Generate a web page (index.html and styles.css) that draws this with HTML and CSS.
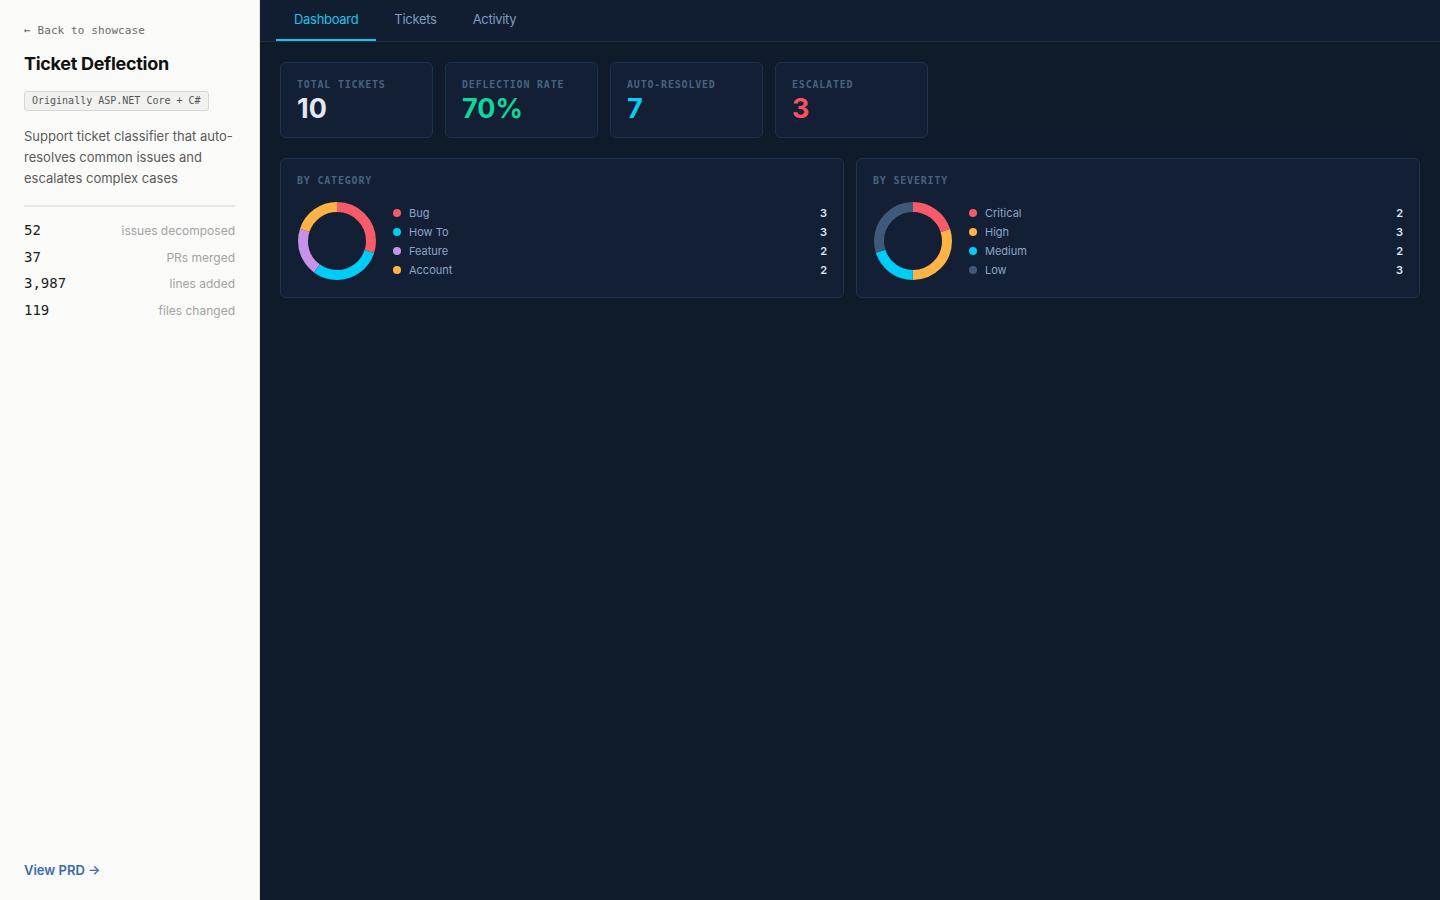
FILE: index.html
```html
<!DOCTYPE html>
<html>
<head>
<meta charset="utf-8">
<link rel="stylesheet" href="styles.css">
</head>
<body>
<div class="app">
  <aside class="sidebar">
    <div class="side-top">
      <a class="back">← Back to showcase</a>
      <h1 class="title">Ticket Deflection</h1>
      <span class="badge">Originally ASP.NET Core + C#</span>
      <p class="desc">Support ticket classifier that auto-resolves common issues and escalates complex cases</p>
      <div class="stats">
        <div class="stat"><span class="num">52</span><span class="lbl">issues decomposed</span></div>
        <div class="stat"><span class="num">37</span><span class="lbl">PRs merged</span></div>
        <div class="stat"><span class="num">3,987</span><span class="lbl">lines added</span></div>
        <div class="stat"><span class="num">119</span><span class="lbl">files changed</span></div>
      </div>
    </div>
    <a class="prd">View PRD →</a>
  </aside>
  <main class="main">
    <nav class="tabs">
      <a class="tab active">Dashboard</a>
      <a class="tab">Tickets</a>
      <a class="tab">Activity</a>
    </nav>
    <section class="content">
      <div class="cards">
        <div class="card"><div class="card-lbl">Total Tickets</div><div class="card-val white">10</div></div>
        <div class="card"><div class="card-lbl">Deflection Rate</div><div class="card-val green">70%</div></div>
        <div class="card"><div class="card-lbl">Auto-Resolved</div><div class="card-val cyan">7</div></div>
        <div class="card"><div class="card-lbl">Escalated</div><div class="card-val red">3</div></div>
      </div>
      <div class="panels">
        <div class="panel">
          <div class="panel-title">By Category</div>
          <div class="panel-body">
            <svg class="donut" width="80" height="80" viewBox="0 0 80 80">
              <g transform="rotate(-90 40 40)" fill="none" stroke-width="10">
                <circle cx="40" cy="40" r="34" stroke="#f75a68" stroke-dasharray="64.09 213.63" stroke-dashoffset="0"/>
                <circle cx="40" cy="40" r="34" stroke="#00cdf7" stroke-dasharray="64.09 213.63" stroke-dashoffset="-64.09"/>
                <circle cx="40" cy="40" r="34" stroke="#c792ea" stroke-dasharray="42.73 213.63" stroke-dashoffset="-128.18"/>
                <circle cx="40" cy="40" r="34" stroke="#ffb347" stroke-dasharray="42.73 213.63" stroke-dashoffset="-170.90"/>
              </g>
            </svg>
            <ul class="legend">
              <li><span class="dot" style="background:#f75a68"></span><span class="name">Bug</span><span class="val">3</span></li>
              <li><span class="dot" style="background:#00cdf7"></span><span class="name">How To</span><span class="val">3</span></li>
              <li><span class="dot" style="background:#c792ea"></span><span class="name">Feature</span><span class="val">2</span></li>
              <li><span class="dot" style="background:#ffb347"></span><span class="name">Account</span><span class="val">2</span></li>
            </ul>
          </div>
        </div>
        <div class="panel">
          <div class="panel-title">By Severity</div>
          <div class="panel-body">
            <svg class="donut" width="80" height="80" viewBox="0 0 80 80">
              <g transform="rotate(-90 40 40)" fill="none" stroke-width="10">
                <circle cx="40" cy="40" r="34" stroke="#f75a68" stroke-dasharray="42.73 213.63" stroke-dashoffset="0"/>
                <circle cx="40" cy="40" r="34" stroke="#ffb347" stroke-dasharray="64.09 213.63" stroke-dashoffset="-42.73"/>
                <circle cx="40" cy="40" r="34" stroke="#00cdf7" stroke-dasharray="42.73 213.63" stroke-dashoffset="-106.82"/>
                <circle cx="40" cy="40" r="34" stroke="#3d5a7a" stroke-dasharray="64.09 213.63" stroke-dashoffset="-149.54"/>
              </g>
            </svg>
            <ul class="legend">
              <li><span class="dot" style="background:#f75a68"></span><span class="name">Critical</span><span class="val">2</span></li>
              <li><span class="dot" style="background:#ffb347"></span><span class="name">High</span><span class="val">3</span></li>
              <li><span class="dot" style="background:#00cdf7"></span><span class="name">Medium</span><span class="val">2</span></li>
              <li><span class="dot" style="background:#3d5a7a"></span><span class="name">Low</span><span class="val">3</span></li>
            </ul>
          </div>
        </div>
      </div>
    </section>
  </main>
</div>
</body>
</html>
```
FILE: styles.css
```css
* { box-sizing: border-box; }
html, body { margin: 0; padding: 0; height: 100%; }
body { font-family: Inter, "Noto Sans", sans-serif; background: #0f1a2b; }
.app { display: flex; height: 900px; }

.sidebar {
  width: 260px; flex: none;
  background: #fafaf9;
  border-right: 1px solid #e4e4e2;
  padding: 24px 24px 22px 24px;
  display: flex; flex-direction: column; justify-content: space-between;
}
.back { font-family: "DejaVu Sans Mono", monospace; font-size: 11px; letter-spacing: 0.1px; color: #6b6b6b; display: block; line-height: 14px; }
.title { font-size: 18px; font-weight: 700; color: #111; margin: 15px 0 0; line-height: 22px; letter-spacing: -0.3px; }
.badge {
  display: inline-block; margin-top: 16px;
  font-family: "DejaVu Sans Mono", monospace; font-size: 10px; color: #555;
  background: #f1f1f0; border: 1px solid #d6d6d4; border-radius: 3px;
  padding: 2px 7px; line-height: 14px;
}
.desc { font-size: 13px; line-height: 21px; color: #5a5a5a; margin: 15px 0 0; padding-bottom: 16px; border-bottom: 2px solid #e7e7e5; }
.stats { margin-top: 15px; display: flex; flex-direction: column; gap: 7.5px; }
.stat { display: flex; justify-content: space-between; align-items: baseline; height: 19px; }
.num { font-family: "DejaVu Sans Mono", monospace; font-size: 14px; color: #1a1a1a; }
.lbl { font-size: 12px; color: #a3a3a3; }
.prd { font-size: 13px; font-weight: 600; color: #3b6aa6; }

.main { flex: 1; display: flex; flex-direction: column; }
.tabs { display: flex; padding-left: 16px; height: 42px; background: #111d31; border-bottom: 1px solid #1c2e47; }
.tab { font-size: 13px; letter-spacing: -0.3px; color: #7d9cc0; padding: 0 18px; line-height: 38px; height: 41px; border-bottom: 2px solid transparent; }
.tab.active { color: #1fc3ea; border-bottom-color: #14c3ec; }

.content { padding: 20px; display: flex; flex-direction: column; gap: 20px; }
.cards { display: flex; gap: 12px; }
.card {
  width: 153px; height: 76px;
  background: #131f34; border: 1px solid #1e3350; border-radius: 6px;
  padding: 16px 16px 0;
}
.card-lbl { font-family: "DejaVu Sans Mono", monospace; font-weight: 700; font-size: 10px; letter-spacing: 0.8px; text-transform: uppercase; color: #486381; line-height: 12px; }
.card-val { font-size: 27px; font-weight: 700; line-height: 32px; margin-top: 2px; }
.white { color: #e2e8f0; }
.green { color: #10d69b; }
.cyan { color: #0acdf4; }
.red { color: #f65260; }

.panels { display: grid; grid-template-columns: 1fr 1fr; gap: 12px; }
.panel { background: #131f34; border: 1px solid #1e3350; border-radius: 6px; padding: 16px 16px 16px; height: 140px; }
.panel-title { font-family: "DejaVu Sans Mono", monospace; font-weight: 700; font-size: 10px; letter-spacing: 0.8px; text-transform: uppercase; color: #486381; line-height: 12px; }
.panel-body { display: flex; align-items: center; gap: 16px; margin-top: 14px; }
.donut { flex: none; display: block; }
.legend { list-style: none; margin: 0; padding: 0; flex: 1; display: flex; flex-direction: column; gap: 5px; }
.legend li { display: flex; align-items: center; font-size: 11px; line-height: 14px; }
.dot { width: 8px; height: 8px; border-radius: 50%; margin-right: 8px; flex: none; }
.name { color: #8aa6c8; flex: 1; }
.val { color: #dbe6f3; font-weight: 600; font-size: 11px; }
```
